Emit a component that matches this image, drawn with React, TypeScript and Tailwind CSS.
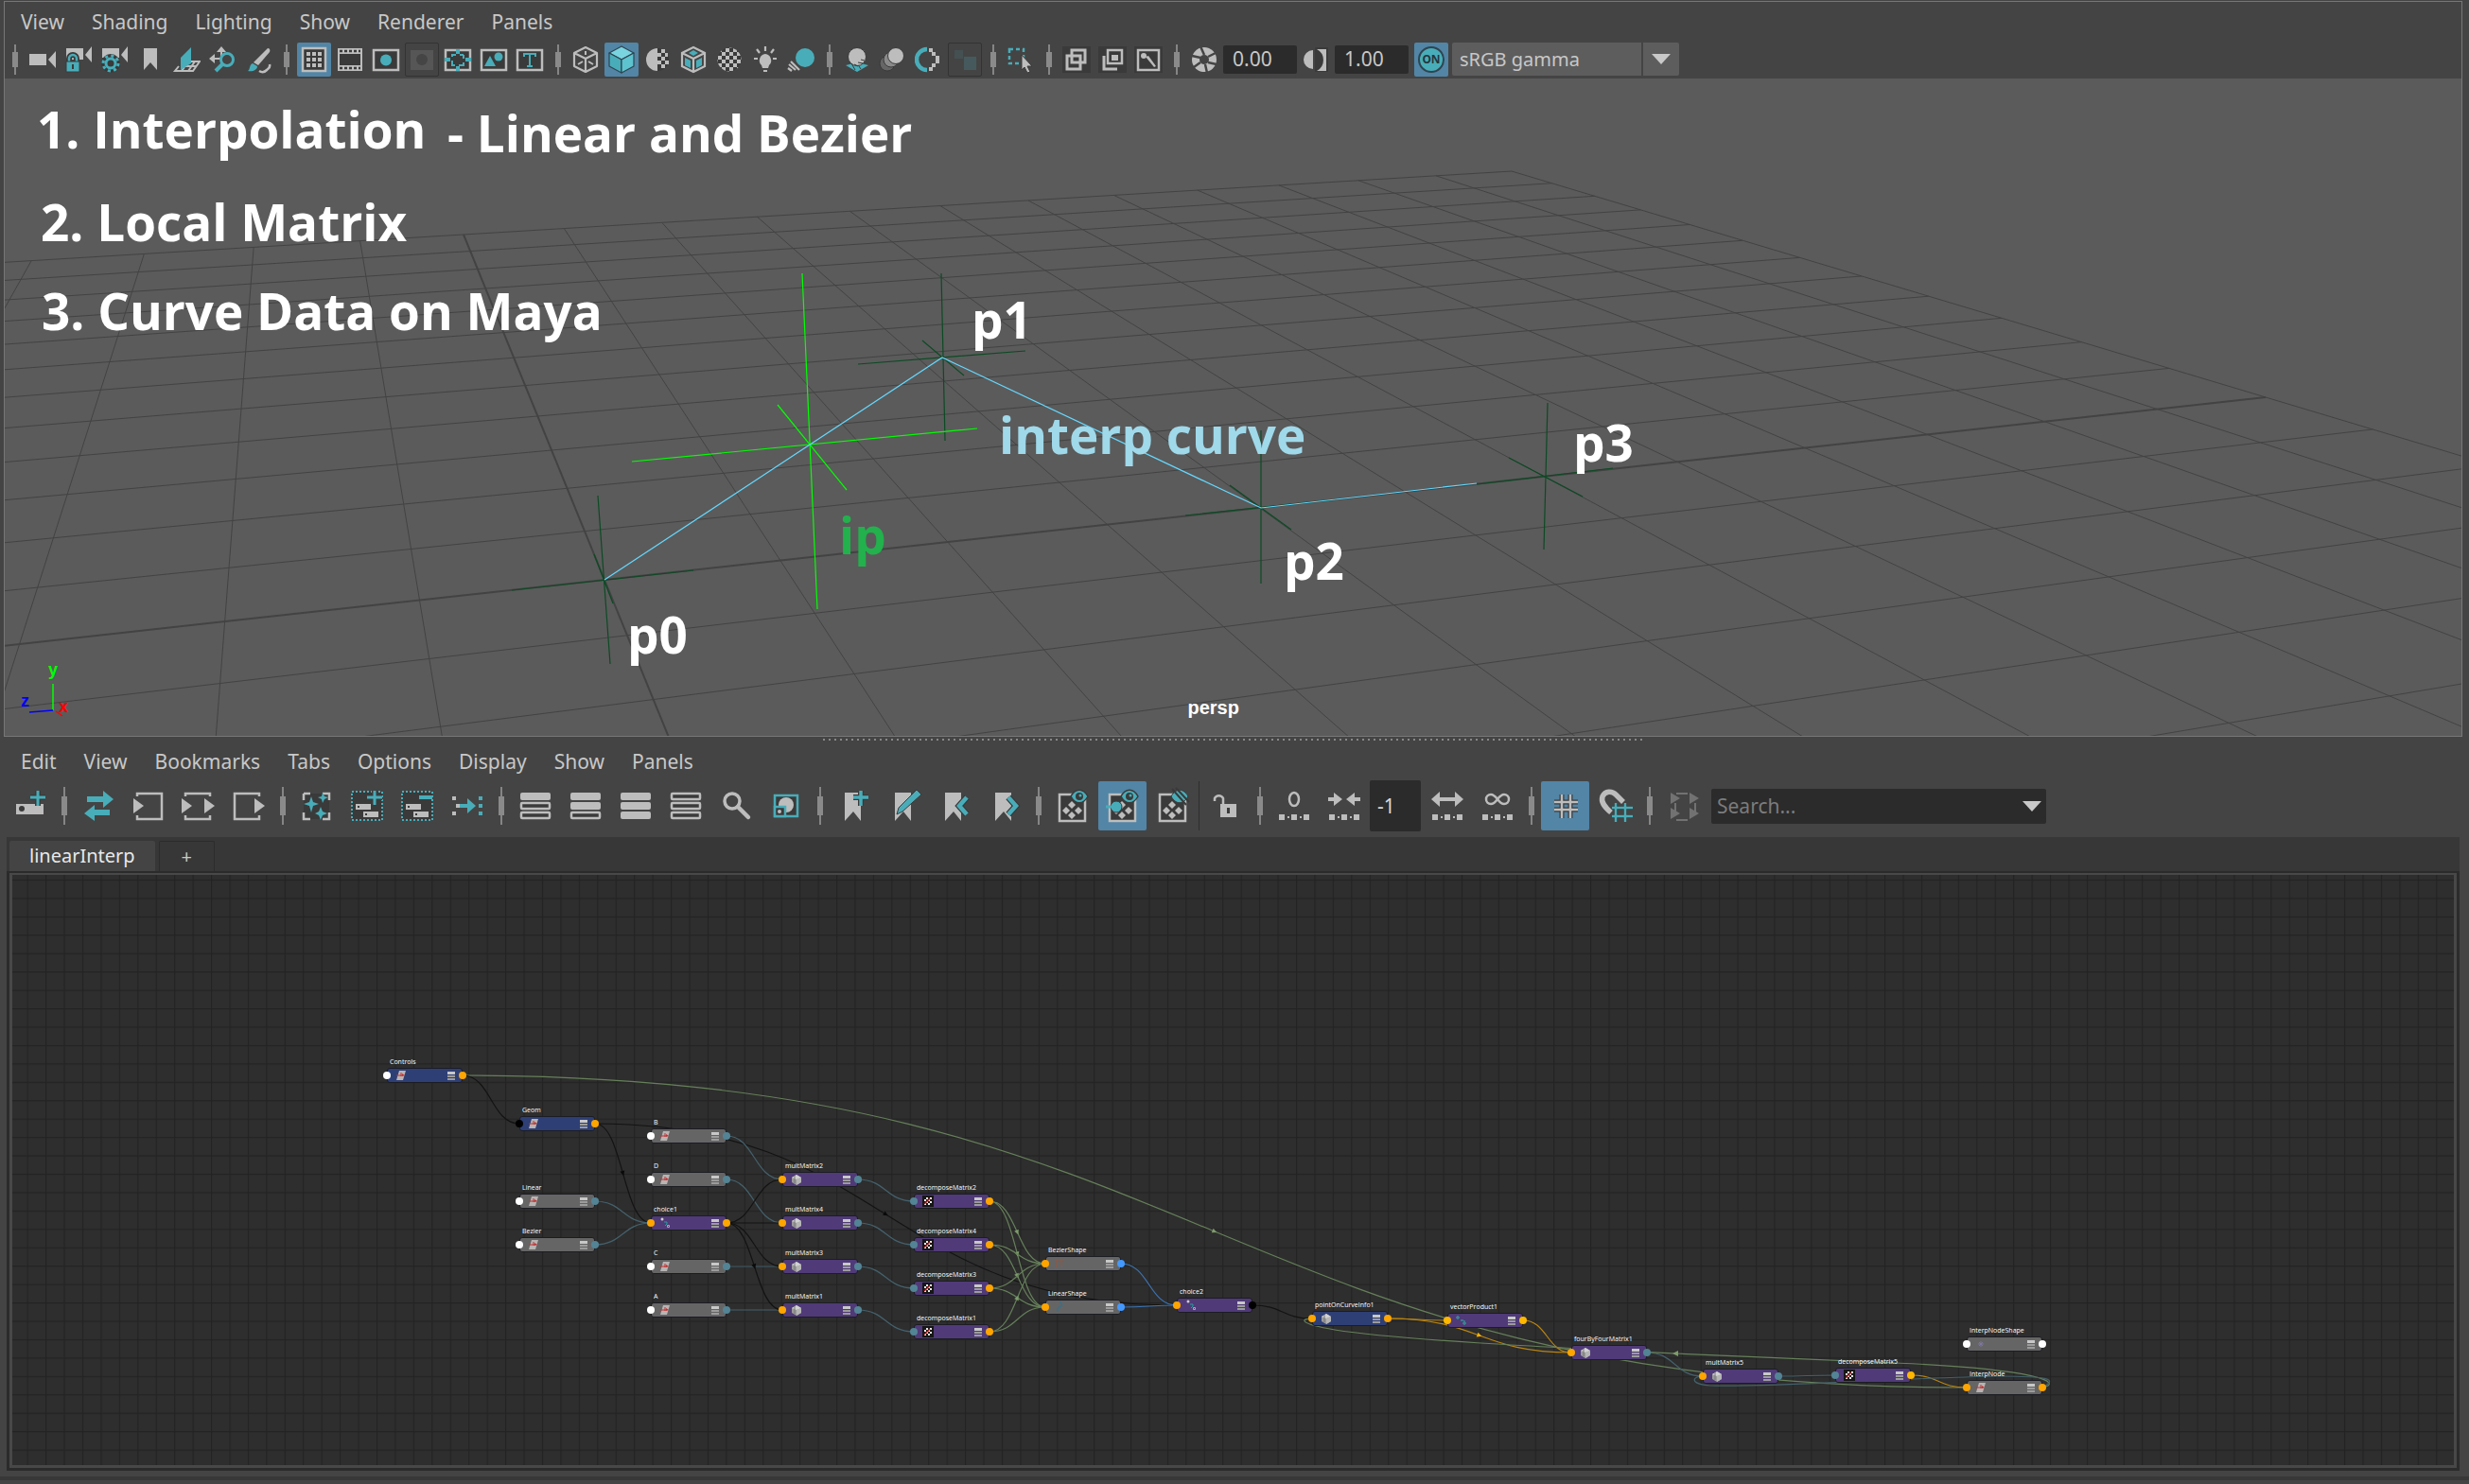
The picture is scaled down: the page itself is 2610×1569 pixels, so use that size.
import React from "react";

const L = "#bdbdbd";
const T = "#48adb9";
const D = "#3a3a3a";

/* ---------- toolbar icons ---------- */

const small: Record<string, React.ReactNode> = {
  camera: (
    <g fill={L}><path d="M1 9h18v12H1zM29 6v18l-8-9z" /></g>
  ),
  cameraLock: (
    <>
      <g fill={L}><path d="M2 3h18v12H2zM29 1v17l-7-8z" /></g>
      <path d="M5 18v-4a4 4 0 0 1 8 0v4" fill="none" stroke={D} strokeWidth="6" />
      <path d="M5 18v-4a4 4 0 0 1 8 0v4" fill="none" stroke={T} strokeWidth="2.5" />
      <path d="M2 17h14v11H2z" fill={T} stroke={D} />
      <path d="M8 20h2v5H8z" fill={D} />
    </>
  ),
  cameraGear: (
    <>
      <g fill={L}><path d="M2 3h18v10H2zM29 1v17l-7-8z" /></g>
      <circle cx="11" cy="19" r="10" fill={D} />
      <circle cx="11" cy="19" r="8" fill="none" stroke={T} strokeWidth="3" strokeDasharray="3.1 3.18" />
      <circle cx="11" cy="19" r="5" fill="none" stroke={T} strokeWidth="3" />
    </>
  ),
  bookmark: <path d="M8 3h14v23l-7-8-7 8z" fill={L} />,
  plane: (
    <>
      <path d="M20 17h9l-7 10H3l4-5M9 22h17M17 27l7-10M10 27l3-4" fill="none" stroke={L} strokeWidth="2" />
      <path d="M9 13 20 2v17L9 26z" fill={T} />
    </>
  ),
  zoomPan: (
    <>
      <path d="M14 1l5 6h-4v6h-2V7H9zM1 14l6-5v4h6v2H7v4z" fill={L} />
      <path d="M16 19 8 27" stroke={T} strokeWidth="4" />
      <circle cx="20" cy="15" r="6.5" fill="#444" stroke={T} strokeWidth="3" />
    </>
  ),
  brush: (
    <>
      <path d="M25 3c2 0 3 2 2 4L15 21l-5-3z" fill={L} />
      <path d="M9 19l5 3c0 4-5 6-10 5 3-2 1-6 5-8z" fill={T} />
      <path d="M16 27c3 2 6 1 8-1s4-2 3-6" fill="none" stroke={L} strokeWidth="2.5" />
    </>
  ),
  grid: (
    <>
      <path d="M3 3h24v24H3z" fill={D} stroke={L} strokeWidth="2.5" />
      <path fill={L} d="M7 7h4v4H7zM13 7h4v4h-4zM19 7h4v4h-4zM7 13h4v4H7zM13 13h4v4h-4zM19 13h4v4h-4zM7 19h4v4H7zM13 19h4v4h-4zM19 19h4v4h-4z" />
    </>
  ),
  film: (
    <>
      <path d="M2 3h26v24H2z" fill={L} />
      <path d="M4 9h22v12H4z" fill={D} />
      <path d="M4 6h22M4 24h22" stroke={D} strokeWidth="2.5" strokeDasharray="3 2" />
    </>
  ),
  gateCircle: (
    <>
      <path d="M2 5h26v21H2z" fill={D} stroke={L} strokeWidth="2.5" />
      <circle cx="15" cy="15.500" r="6" fill={T} />
    </>
  ),
  gateOff: (
    <>
      <path d="M3 5h24v21H3z" fill="#565656" />
      <circle cx="15" cy="15" r="6" fill="#454545" />
    </>
  ),
  gateDash: (
    <>
      <path d="M2 5h26v21H2z" fill={D} stroke={L} strokeWidth="2.5" />
      <path d="M9 10h12v11H9z" fill="none" stroke={T} strokeWidth="2" strokeDasharray="4 4 4 0" />
      <path d="M15 4v5M15 22v5M1 15h6M23 15h6" stroke={T} strokeWidth="4" />
    </>
  ),
  gateShapes: (
    <>
      <path d="M2 5h26v21H2z" fill={D} stroke={L} strokeWidth="2.5" />
      <path d="M5 22l6-11 6 11z" fill={T} />
      <circle cx="20" cy="12" r="4.500" fill={T} />
    </>
  ),
  gateT: (
    <>
      <path d="M2 5h26v21H2z" fill={D} stroke={L} strokeWidth="2.5" />
      <path d="M9 12V9h12v3M15 9v13M12 22h6" fill="none" stroke={T} strokeWidth="2" />
    </>
  ),
  cubeWire: (
    <g fill="none" stroke={L} strokeWidth="2.2" strokeLinejoin="round">
      <path d="M15 2 27 8v14l-12 6-12-6V8zM3 8l12 6 12-6M15 14v14" />
      <path d="M15 6v4M7 20l5-3M23 20l-5-3" strokeWidth="2" />
    </g>
  ),
  cubeSolid: (
    <g stroke="#2f4450" strokeWidth="1.2" strokeLinejoin="round">
      <path d="M15 1 28 8l-13 7L2 8z" fill="#7ad4e0" />
      <path d="M2 8l13 7v14L2 22z" fill="#48adb9" />
      <path d="M28 8l-13 7v14l13-7z" fill="#5cc3cf" />
    </g>
  ),
  sphereHalf: (
    <>
      <circle cx="15" cy="15" r="12" fill={D} />
      <path d="M15 3a12 12 0 0 0 0 24z" fill={L} />
      <path fill={L} d="M19 4h4v4h-4zM15 8h4v4h-4zM23 8h3v4h-3zM19 12h4v4h-4zM15 16h4v4h-4zM23 16h4v4h-4zM19 20h4v4h-4z" />
    </>
  ),
  cubeTex: (
    <>
      <path d="M15 2 27 8v14l-12 6-12-6V8zM3 8l12 6 12-6M15 14v14" fill="none" stroke={L} strokeWidth="2.2" />
      <path d="M15 5l5 3-5 3-5-3zM6 13l6 3v8l-6-3zM24 13l-6 3v8l6-3z" fill={T} />
    </>
  ),
  checker: (
    <>
      <defs>
        <pattern id="chk" width="8" height="8" x="3" y="3" patternUnits="userSpaceOnUse">
          <path d="M0 0h8v8H0z" fill={D} />
          <path d="M0 0h4v4H0zM4 4h4v4H4z" fill={L} />
        </pattern>
      </defs>
      <circle cx="15" cy="15" r="12.500" fill="url(#chk)" />
    </>
  ),
  bulb: (
    <>
      <path d="M15 9a7 7 0 0 1 4 12l-1 3h-6l-1-3a7 7 0 0 1 4-12z" fill={L} />
      <path d="M13 26h4v2h-4z" fill={L} />
      <path d="M15 1v5M6 4l3 4M24 4l-3 4M3 14h4M23 14h4" stroke={L} strokeWidth="2.2" />
    </>
  ),
  shadowTeal: (
    <>
      <circle cx="19" cy="13" r="10" fill={T} />
      <path d="M2 20l7 6M4 17l9 9M1 24l4 3" stroke={L} strokeWidth="2.2" />
    </>
  ),
  ballGround: (
    <>
      <path d="M3 21l12-3 12 3-12 7z" fill={T} />
      <path d="M9 19l4 7M15 19l4 6" stroke={D} />
      <circle cx="15" cy="12" r="9.500" fill={L} stroke={D} />
      <path d="M12 20l4 2M16 18l5 1M19 15l4 1" stroke={D} />
    </>
  ),
  ballTrail: (
    <>
      <circle cx="9" cy="19" r="8" fill="#666" stroke={D} />
      <circle cx="13" cy="15" r="8" fill="#8a8a8a" stroke={D} />
      <circle cx="18" cy="11" r="8.500" fill={L} stroke={D} />
    </>
  ),
  ringDash: (
    <>
      <path d="M13 4a11 11 0 0 0 0 22" fill="none" stroke={T} strokeWidth="4.500" />
      <path d="M15 3h4v4h3v4h4v8h-4v4h-3v4h-4v-4h3v-4h4v-8h-4V7h-3z" fill={L} />
    </>
  ),
  squaresOff: (
    <>
      <path d="M14 12h13v14H14z" fill="#465a5e" />
      <path d="M4 5h9v9H4z" fill="#445052" />
    </>
  ),
  marquee: (
    <>
      <path d="M3 4h15v15H3z" fill="none" stroke={T} strokeWidth="2.500" strokeDasharray="4 3" />
      <path d="M16 10l11 12h-5l3 6-3 1-3-6-3 3z" fill={L} stroke={D} />
    </>
  ),
  layersA: (
    <>
      <path d="M0 1h30v28H0z" fill={D} />
      <path d="M10 5h14v13H10z" fill="none" stroke={L} strokeWidth="3" />
      <path d="M5 11h14v14H5z" fill="none" stroke={L} strokeWidth="3" />
    </>
  ),
  layersB: (
    <>
      <path d="M0 1h30v28H0z" fill={D} />
      <path d="M10 5h15v14H10z" fill="none" stroke={L} strokeWidth="2.500" />
      <path d="M6 11v14h14" fill="none" stroke={L} strokeWidth="3" />
      <path d="M14 10h7v6h-7z" fill={L} />
    </>
  ),
  layersC: (
    <>
      <path d="M0 1h30v28H0z" fill={D} />
      <path d="M4 5h22v21H4z" fill="none" stroke={L} strokeWidth="2.500" />
      <circle cx="10" cy="11" r="3" fill={L} />
      <path d="M12 12l3-1 8 11-2 1z" fill={L} />
    </>
  ),
  aperture: (
    <>
      <circle cx="15" cy="15" r="13" fill={L} />
      <circle cx="15" cy="15" r="5" fill="#444" />
      <path d="M11 1l4 9M27 8l-8 4M28 20l-9-2M18 29l-2-9M4 23l7-5M2 11l9 2" stroke="#444" strokeWidth="2.500" />
    </>
  ),
  contrast: (
    <>
      <path d="M14 2h14v26H14z" fill={D} />
      <path d="M12 5a10 10 0 0 0 0 20z" fill={L} />
      <path d="M16 4h10v23H16a13 13 0 0 0 0-23z" fill={L} />
    </>
  ),
};

const bar = (y: number, full: boolean) =>
  full ? (
    <rect key={y} x="2" y={y} width="32" height="8" rx="2" fill={L} />
  ) : (
    <rect key={y} x="3" y={y + 1} width="30" height="6" rx="1" fill={D} stroke={L} strokeWidth="2.500" />
  );
const mark = <path d="M8 4h17v30l-8-10-9 10z" fill={L} />;
const dots = <path d="M2 27h6v6H2zM11 29h2v2h-2zM15 27h6v6h-6zM24 29h2v2h-2zM28 27h6v6h-6z" fill={L} />;
const diamonds = (
  <>
    <path d="M4 6h27v28H4z" fill={D} stroke={L} strokeWidth="2.500" />
    <path d="M17 13l4 4-4 4-4-4zM11 19l4 4-4 4-4-4zM24 19l4 4-4 4-4-4zM17 24l4 4-4 4-4-4z" fill={L} />
  </>
);
const eye = (
  <>
    <path d="M16 8c5-9 13-9 18 0-5 9-13 9-18 0z" fill={T} stroke={D} strokeWidth="1.500" />
    <circle cx="25" cy="8" r="4" fill={D} />
    <circle cx="26" cy="7" r="1.500" fill={T} />
  </>
);

const big: Record<string, React.ReactNode> = {
  addNode: (
    <>
      <path d="M3 16h29v11H3z" fill={L} />
      <circle cx="9" cy="21" r="3" fill={D} />
      <path d="M26 2v16M18 9h16" stroke={D} strokeWidth="6" />
      <path d="M26 2v16M18 9h16" stroke={T} strokeWidth="3" />
    </>
  ),
  swap: <path d="M6 8h17V2l11 9-11 9v-6H6zM30 22H14v-5L3 26l11 8v-6h16z" fill={T} />,
  inBox: (
    <>
      <path d="M6 5h26v27H6z" fill="none" stroke={L} strokeWidth="2.500" />
      <path d="M1 8h7v20H1z" fill="#444" /><path d="M2 10l11 8-11 8z" fill={L} />
    </>
  ),
  inOut: (
    <>
      <path d="M4 5h26v27H4z" fill="none" stroke={L} strokeWidth="2.500" />
      <path d="M0 8h7v20H0zM27 8h8v20h-8z" fill="#444" />
      <path d="M0 10l11 8-11 8zM24 10l11 8-11 8z" fill={L} />
    </>
  ),
  outBox: (
    <>
      <path d="M3 5h26v27H3z" fill="none" stroke={L} strokeWidth="2.500" />
      <path d="M26 8h7v20h-7z" fill="#444" /><path d="M24 10l11 8-11 8z" fill={L} />
    </>
  ),
  sparkles: (
    <>
      <path d="M4 5h27v27H4z" fill={D} stroke={L} strokeWidth="2.500" strokeDasharray="7 13 14 13 14 13 14 13 7 0" />
      <path d="M12 8l2 6 6 2-6 2-2 7-2-7-6-2 6-2zM24 4l2 4 4 1-4 2-2 4-1-4-4-2 4-1zM22 19l2 5 5 2-5 2-2 5-2-5-4-2 4-2z" fill={T} />
    </>
  ),
  addSel: (
    <>
      <path d="M2 3h32v30H2z" fill={D} stroke={T} strokeWidth="2" strokeDasharray="2 2" />
      <path d="M6 16h16v6H6zM14 24h16v6H14z" fill={L} />
      <path d="M8 18h2v2H8zM16 26h2v2h-2z" fill={D} />
      <path d="M26 2v15M18 9h16" stroke={D} strokeWidth="6" />
      <path d="M26 2v15M18 9h16" stroke={T} strokeWidth="3" />
    </>
  ),
  subSel: (
    <>
      <path d="M2 3h32v30H2z" fill={D} stroke={T} strokeWidth="2" strokeDasharray="2 2" />
      <path d="M6 16h16v6H6zM14 24h16v6H14z" fill={L} />
      <path d="M8 18h2v2H8zM16 26h2v2h-2z" fill={D} />
      <path d="M20 9h14" stroke={T} strokeWidth="4" />
    </>
  ),
  graph: (
    <>
      <path d="M2 8h4v4H2zM6 16h4v4H6zM2 24h4v4H2z" fill={L} />
      <path d="M10 16h8v-6l9 8-9 8v-6h-8zM30 8h4v4h-4zM30 16h4v4h-4zM30 24h4v4h-4z" fill={T} />
    </>
  ),
  bars1: <>{bar(4, true)}{bar(14, false)}{bar(24, false)}</>,
  bars2: <>{bar(4, true)}{bar(14, true)}{bar(24, false)}</>,
  bars3: <>{bar(4, true)}{bar(14, true)}{bar(24, true)}</>,
  bars4: <>{bar(4, false)}{bar(14, false)}{bar(24, false)}</>,
  search: (
    <g fill="none" stroke={L}>
      <circle cx="14" cy="13" r="8" strokeWidth="3.500" />
      <path d="M20 19l11 11" strokeWidth="4.500" strokeLinecap="round" />
    </g>
  ),
  swatch: (
    <>
      <path d="M6 7h24v22H6z" fill={D} stroke={T} strokeWidth="2.500" />
      <circle cx="18" cy="17" r="8" fill={L} />
      <path d="M6 19h11v10H6z" fill={D} stroke={T} strokeWidth="2.500" />
      <circle cx="11" cy="24" r="2" fill={L} />
    </>
  ),
  markAdd: (
    <>
      {mark}
      <path d="M25 2v16M17 9h16" stroke={D} strokeWidth="6" />
      <path d="M25 2v16M17 9h16" stroke={T} strokeWidth="3.500" />
    </>
  ),
  markEdit: (
    <>
      {mark}
      <path d="M31 1l5 5L16 24l-6 3 2-7z" fill={T} stroke={D} />
    </>
  ),
  markPrev: (
    <>
      {mark}
      <path d="M31 9l-8 9 8 9" fill="none" stroke={D} strokeWidth="7" />
      <path d="M31 9l-8 9 8 9" fill="none" stroke={T} strokeWidth="4.500" />
    </>
  ),
  markNext: (
    <>
      {mark}
      <path d="M22 9l8 9-8 9" fill="none" stroke={D} strokeWidth="7" />
      <path d="M22 9l8 9-8 9" fill="none" stroke={T} strokeWidth="4.500" />
    </>
  ),
  viewA: <>{diamonds}{eye}</>,
  viewB: (
    <>
      {diamonds}{eye}
      <circle cx="11" cy="19" r="6" fill={T} stroke={D} /><path d="M0 19h8" stroke={T} strokeWidth="3" />
    </>
  ),
  viewC: (
    <>
      {diamonds}
      <path d="M16 8c5-9 13-9 18 0-5 9-13 9-18 0z" fill={T} stroke={D} />
      <path d="M17 0l15 17M21-1l14 15" stroke={D} strokeWidth="2" />
    </>
  ),
  unlock: (
    <>
      <path d="M15 18V10a5 5 0 0 0-9 0v3" fill="none" stroke={L} strokeWidth="2.500" />
      <path d="M12 16h17v14H12z" fill={L} />
      <path d="M19 20h3v6h-3z" fill={D} />
    </>
  ),
  zero: (
    <>
      <ellipse cx="18" cy="11" rx="5" ry="7" fill="none" stroke={L} strokeWidth="2.500" />
      {dots}
    </>
  ),
  collapse: (
    <>
      <path d="M1 9h6V4l9 7-9 7v-5H1zM35 9h-6V4l-9 7 9 7v-5h6z" fill={L} />
      {dots}
    </>
  ),
  expand: (
    <>
      <path d="M1 11l9-8v6h16V3l9 8-9 8v-6H10v6z" fill={L} />
      {dots}
    </>
  ),
  infinity: (
    <>
      <path d="M18 11c-3-4-5-5-7-5a5 5 0 0 0 0 10c2 0 4-1 7-5s5-5 7-5a5 5 0 0 1 0 10c-2 0-4-1-7-5z" fill="none" stroke={L} strokeWidth="2.500" />
      {dots}
    </>
  ),
  hash: (
    <>
      <path d="M14 6v25M23 6v25M6 14h25M6 22h25" stroke={D} strokeWidth="5" />
      <path d="M14 6v25M23 6v25M6 14h25M6 22h25" stroke={L} strokeWidth="2.500" />
    </>
  ),
  magnet: (
    <>
      <path d="M13 25C6 19 2 14 4 8c3-6 10-6 14-2l8 8" fill="none" stroke={L} strokeWidth="5.500" />
      <path d="M18 15v20M28 15v20M14 20h22M14 29h22" stroke={D} strokeWidth="4" />
      <path d="M18 15v20M28 15v20M14 20h22M14 29h22" stroke={T} strokeWidth="2.500" />
    </>
  ),
  frame: (
    <g fill="#727272">
      <path d="M4 4l10 6-10 6zM24 4l10 6-10 6zM4 20l10 6-10 6zM24 20l10 6-10 6zM10 4h12v2H10zM10 32h12v2H10zM8 15h2v10H8zM29 15h2v10h-2z" />
    </g>
  ),
};

function SmallBtn({ name, on, off }: { name: string; on?: boolean; off?: boolean }) {
  const tone = on ? "bg-[#5285a6]" : off ? "border border-[#333] bg-[#444]" : "";
  return (
    <button aria-label={name} aria-pressed={on} className={`flex h-9 w-9 shrink-0 items-center justify-center rounded-xs ${tone}`}>
      <svg width="30" height="30" viewBox="0 0 30 30" className="shrink-0">{small[name]}</svg>
    </button>
  );
}

function BigBtn({ name, on }: { name: string; on?: boolean }) {
  return (
    <button aria-label={name} aria-pressed={on} className={`flex h-[52px] w-[51px] shrink-0 items-center justify-center rounded-xs ${on ? "bg-[#5285a6]" : ""}`}>
      <svg width="36" height="36" viewBox="0 0 36 36" className="shrink-0 overflow-visible">{big[name]}</svg>
    </button>
  );
}

function Sep({ tall }: { tall?: boolean }) {
  return (
    <div className={`flex shrink-0 flex-col items-center justify-center ${tall ? "w-[17px]" : "w-[19px]"}`}>
      <div className={`w-0.5 bg-[#858585] ${tall ? "h-2.5" : "h-2"}`} />
      <div className={`w-1.5 bg-[#8a8a8a] ${tall ? "h-5" : "h-4"}`} />
      <div className={`w-0.5 bg-[#858585] ${tall ? "h-2.5" : "h-2"}`} />
    </div>
  );
}

function Menu({ items }: { items: string[] }) {
  return (
    <nav className="flex gap-[29px] pl-[17px] text-[21px] leading-7 text-[#c8c8c8]">
      {items.map((t) => <button key={t}>{t}</button>)}
    </nav>
  );
}

/* ---------- perspective floor grid ---------- */

type P = [number, number];

function homography(p00: P, p10: P, p11: P, p01: P) {
  const dx1 = p10[0] - p11[0], dx2 = p01[0] - p11[0];
  const dy1 = p10[1] - p11[1], dy2 = p01[1] - p11[1];
  const sx = p00[0] - p10[0] + p11[0] - p01[0];
  const sy = p00[1] - p10[1] + p11[1] - p01[1];
  const den = dx1 * dy2 - dx2 * dy1;
  const g = (sx * dy2 - dx2 * sy) / den;
  const h = (dx1 * sy - sx * dy1) / den;
  return {
    w: (u: number, v: number) => g * u + h * v + 1,
    at: (u: number, v: number): P => {
      const w = g * u + h * v + 1;
      return [
        ((p10[0] - p00[0] + g * p10[0]) * u + (p01[0] - p00[0] + h * p01[0]) * v + p00[0]) / w,
        ((p10[1] - p00[1] + g * p10[1]) * u + (p01[1] - p00[1] + h * p01[1]) * v + p00[1]) / w,
      ];
    },
  };
}

const floor = homography([634, 530], [2390, 337], [1593, 98], [485, 165]);

function floorLine(f: (t: number) => P) {
  const limit = 0.08;
  let a = -1;
  const b = 1;
  const wa = floor.w(...f(a)), wb = floor.w(...f(b));
  if (wb < limit) return null;
  if (wa < limit) a = a + ((limit - wa) / (wb - wa)) * (b - a);
  return [floor.at(...f(a)), floor.at(...f(b))];
}

const floorLines: { p: P[]; axis: boolean }[] = [];
for (let i = -12; i <= 12; i++) {
  const k = i / 12;
  for (const f of [(t: number): P => [t, k], (t: number): P => [k, t]]) {
    const p = floorLine(f);
    if (p) floorLines.push({ p: p as P[], axis: i === 0 });
  }
}

function Scene() {
  return (
    <svg className="absolute inset-0 h-full w-full" aria-hidden="true">
      <g stroke="#434343" strokeWidth="1">
        {floorLines.map(({ p, axis }, i) => (
          <line key={i} x1={p[0][0]} y1={p[0][1]} x2={p[1][0]} y2={p[1][1]} strokeWidth={axis ? 2 : 1} />
        ))}
      </g>
      <g stroke="#0c4a24" strokeWidth="1.200">
        <path d="M990 206 994 383M902 302l177-14M970 277l44 37" />
        <path d="M627 441 640 619M536 541 728 520M623 503 643 555" />
        <path d="M1328 372V534M1248 462l160-17M1295 430l65 47" />
        <path d="M1631 343 1627 498M1556 429 1700 412M1590 401l78 41" />
      </g>
      <path d="M843 206 859 561M663 405 1028 370M817 345 890 435" fill="none" stroke="#0f0" strokeWidth="1.200" />
      <path d="M634 530 991 295 1328 454 1556 428" fill="none" stroke="#64d9ff" strokeWidth="1.200" />
      <path d="M51 640v28" stroke="#0f0" strokeWidth="1.500" />
      <path d="M26 670l25-2" stroke="#00f" strokeWidth="1.500" />
      <path d="M54 669l7 5" stroke="#f00" strokeWidth="1.500" />
    </svg>
  );
}

function Note({ className, children }: { className: string; children: React.ReactNode }) {
  return <span className={`absolute whitespace-nowrap font-bold ${className}`}>{children}</span>;
}

/* ---------- node graph ---------- */

const PORT: Record<string, string> = { w: "#fff", k: "#000", o: "#ffa500", y: "#ffb700", t: "#538495", b: "#4499ff" };
const BODY: Record<string, string> = { blue: "#2e3f76", grey: "#656565", purple: "#503a78" };

type NodeT = { id: string; label: string; x: number; y: number; body: string; ports: string; glyph: string };
const n = (label: string, x: number, y: number, body: string, ports: string, glyph: string): NodeT => ({ id: label, label, x, y, body, ports, glyph });

const nodes: NodeT[] = [
  n("Controls", 396, 212, "blue", "wo", "xform"),
  n("Geom", 536, 263, "blue", "ko", "xform"),
  n("B", 675, 276, "grey", "wt", "xform"),
  n("D", 675, 322, "grey", "wt", "xform"),
  n("Linear", 536, 345, "grey", "wt", "xform"),
  n("Bezier", 536, 391, "grey", "wt", "xform"),
  n("choice1", 675, 368, "purple", "oo", "choice"),
  n("C", 675, 414, "grey", "wt", "xform"),
  n("A", 675, 460, "grey", "wt", "xform"),
  n("multMatrix2", 814, 322, "purple", "ot", "cube"),
  n("multMatrix4", 814, 368, "purple", "ot", "cube"),
  n("multMatrix3", 814, 414, "purple", "ot", "cube"),
  n("multMatrix1", 814, 460, "purple", "ot", "cube"),
  n("decomposeMatrix2", 953, 345, "purple", "to", "decomp"),
  n("decomposeMatrix4", 953, 391, "purple", "to", "decomp"),
  n("decomposeMatrix3", 953, 437, "purple", "to", "decomp"),
  n("decomposeMatrix1", 953, 483, "purple", "to", "decomp"),
  n("BezierShape", 1092, 411, "grey", "ob", "bezier"),
  n("LinearShape", 1092, 457, "grey", "ob", "curve"),
  n("choice2", 1231, 455, "purple", "ok", "choice"),
  n("pointOnCurveInfo1", 1374, 469, "blue", "oo", "cube"),
  n("vectorProduct1", 1517, 471, "purple", "yy", "vector"),
  n("fourByFourMatrix1", 1648, 505, "purple", "ot", "cube"),
  n("multMatrix5", 1787, 530, "purple", "ot", "cube"),
  n("decomposeMatrix5", 1927, 529, "purple", "ty", "decomp"),
  n("InterpNodeShape", 2066, 496, "grey", "ww", "star"),
  n("InterpNode", 2066, 542, "grey", "oo", "xform"),
];

const GREEN = "#66805a", TEAL = "#44616c", INK = "#131313", GOLD = "#b98512", SKY = "#3c74b4";

const wires: [string, string, string][] = [
  ["Controls", "InterpNode", GREEN],
  ["Controls", "Geom", INK],
  ["Geom", "choice1", INK],
  ["Geom", "choice2", INK],
  ["Linear", "choice1", TEAL],
  ["Bezier", "choice1", TEAL],
  ["B", "multMatrix2", TEAL],
  ["D", "multMatrix4", TEAL],
  ["C", "multMatrix3", TEAL],
  ["A", "multMatrix1", TEAL],
  ["choice1", "multMatrix2", INK],
  ["choice1", "multMatrix4", INK],
  ["choice1", "multMatrix3", INK],
  ["choice1", "multMatrix1", INK],
  ["multMatrix2", "decomposeMatrix2", TEAL],
  ["multMatrix4", "decomposeMatrix4", TEAL],
  ["multMatrix3", "decomposeMatrix3", TEAL],
  ["multMatrix1", "decomposeMatrix1", TEAL],
  ["decomposeMatrix2", "BezierShape", GREEN],
  ["decomposeMatrix2", "LinearShape", GREEN],
  ["decomposeMatrix4", "BezierShape", GREEN],
  ["decomposeMatrix4", "LinearShape", GREEN],
  ["decomposeMatrix3", "BezierShape", GREEN],
  ["decomposeMatrix3", "LinearShape", GREEN],
  ["decomposeMatrix1", "BezierShape", GREEN],
  ["decomposeMatrix1", "LinearShape", GREEN],
  ["BezierShape", "choice2", SKY],
  ["LinearShape", "choice2", SKY],
  ["choice2", "pointOnCurveInfo1", INK],
  ["pointOnCurveInfo1", "vectorProduct1", GOLD],
  ["pointOnCurveInfo1", "fourByFourMatrix1", GOLD],
  ["vectorProduct1", "fourByFourMatrix1", GOLD],
  ["fourByFourMatrix1", "multMatrix5", TEAL],
  ["multMatrix5", "decomposeMatrix5", TEAL],
  ["decomposeMatrix5", "InterpNode", GOLD],
];

const ARROW: Record<string, string> = { [GREEN]: "#7d9c6c", [INK]: "#0a0a0a", [GOLD]: "#ffb000", [TEAL]: TEAL, [SKY]: SKY };
const byId = Object.fromEntries(nodes.map((d) => [d.id, d]));

function Wire({ from, to, color }: { from: string; to: string; color: string }) {
  const a = byId[from], b = byId[to];
  const x1 = a.x + 80, x2 = b.x, mx = (x1 + x2) / 2, my = (a.y + b.y) / 2;
  const long = Math.hypot(x2 - x1, b.y - a.y) > 80;
  const deg = (Math.atan2(2 * (b.y - a.y), x2 - x1) * 180) / Math.PI;
  return (
    <>
      <path d={`M${x1} ${a.y}C${mx} ${a.y} ${mx} ${b.y} ${x2} ${b.y}`} fill="none" stroke={color} strokeWidth="1.200" />
      {long && <path d="M-2.500-2.500 2.500 0-2.500 2.500z" transform={`translate(${mx} ${my}) rotate(${deg})`} fill={ARROW[color]} />}
    </>
  );
}

const glyphs: Record<string, React.ReactNode> = {
  xform: (
    <>
      <path d="M4 1h7L8 11H1z" fill="#b8b4b4" />
      <path d="M1 6h6M6 3v4" stroke="#c03030" strokeWidth="1" /><path d="M7 4l3 2-3 1z" fill="#c03030" />
    </>
  ),
  choice: (
    <>
      <circle cx="3" cy="2" r="1.500" fill="#ccc" />
      <path d="M5 5h3v2L6 9" fill="none" stroke="#2e9aa0" />
      <path d="M8.500 8.500h2v2h-2z" fill="none" stroke="#aaa" />
    </>
  ),
  cube: (
    <>
      <path d="M6 1l5 3v5l-5 3-5-3V4z" fill="#9a9a9a" />
      <path d="M6 1l5 3-5 2-5-2z" fill="#d2d2d2" /><path d="M6 6l5-2v5l-5 3z" fill="#b5b5b5" />
      <path d="M4 2v8" stroke="#777" />
    </>
  ),
  decomp: (
    <>
      <path d="M0 0h12v12H0z" fill="#161616" />
      <path d="M2 4h2v2H2zM4 2h2v2H4zM6 4h2v2H6zM8 2h2v2H8zM8 6h2v2H8zM6 8h2v2H6zM4 6h2v2H4zM2 8h2v2H2z" fill="#eee" />
      <path d="M2 9l6-6" stroke="#b01818" strokeWidth="1.500" />
    </>
  ),
  bezier: <path d="M1 2h10M3 2v7M8 2v7M2 9h2" fill="none" stroke="#8a5a48" strokeWidth="1.200" />,
  curve: <path d="M6 1c4 1 3 4 0 5S4 9 4 11" fill="none" stroke="#3c6f86" strokeWidth="1.500" />,
  vector: <path d="M2 1v4M0 3h4M5 6h3M9 6v5M7 9h4" fill="none" stroke="#3a8a94" strokeWidth="1.500" />,
  star: <path d="M6 3v6M3 6h6M4 4l4 4M8 4l-4 4" stroke="#8378a8" strokeWidth="0.800" />,
};

function GraphNode({ d }: { d: NodeT }) {
  return (
    <div className="absolute w-20" style={{ left: d.x, top: d.y - 18 }}>
      <div className="h-2.5 whitespace-nowrap pl-[3px] font-['Open_Sans','Noto_Sans',sans-serif] text-[7px] leading-2 text-white">{d.label}</div>
      <div className="relative flex h-4 items-center justify-between rounded-[3px] border border-[#1c1c24] px-2" style={{ backgroundColor: BODY[d.body] }}>
        <svg width="12" height="12" viewBox="0 0 12 12" className="shrink-0">{glyphs[d.glyph]}</svg>
        <svg width="8" height="9" viewBox="0 0 8 9" className="-mr-px shrink-0">
          <path d="M0 0h8v3H0z" fill="#c8c8c8" />
          <path d="M0 4h8v2H0zM0 7h8v2H0z" fill="#9c9c9c" />
        </svg>
        <i className="absolute -left-[5px] top-[3px] size-2 rounded-full" style={{ backgroundColor: PORT[d.ports[0]] }} />
        <i className="absolute -right-[5px] top-[3px] size-2 rounded-full" style={{ backgroundColor: PORT[d.ports[1]] }} />
      </div>
    </div>
  );
}

const names = (s: string) => s.split(" ");

export default function App() {
  return (
    <div className="flex h-screen flex-col bg-[#444] pt-px font-['Noto_Sans','Open_Sans',sans-serif]">
      {/* viewport panel */}
      <section className="mx-1 mr-[7px] flex min-h-0 flex-[777] flex-col border border-[#777] bg-[#444]">
        <div className="pt-[7px]">
          <Menu items={names("View Shading Lighting Show Renderer Panels")} />
        </div>
        <div className="flex h-[46px] items-center gap-0.5 pl-px pt-[5px]">
          <Sep />
          {names("camera cameraLock cameraGear bookmark plane zoomPan brush").map((k) => <SmallBtn key={k} name={k} />)}
          <Sep />
          <SmallBtn name="grid" on />
          <SmallBtn name="film" />
          <SmallBtn name="gateCircle" />
          <SmallBtn name="gateOff" off />
          {names("gateDash gateShapes gateT").map((k) => <SmallBtn key={k} name={k} />)}
          <Sep />
          <SmallBtn name="cubeWire" />
          <SmallBtn name="cubeSolid" on />
          {names("sphereHalf cubeTex checker bulb shadowTeal").map((k) => <SmallBtn key={k} name={k} />)}
          <Sep />
          {names("ballGround ballTrail ringDash").map((k) => <SmallBtn key={k} name={k} />)}
          <SmallBtn name="squaresOff" off />
          <Sep />
          <SmallBtn name="marquee" />
          <Sep />
          {names("layersA layersB layersC").map((k) => <SmallBtn key={k} name={k} />)}
          <Sep />
          <SmallBtn name="aperture" />
          <input aria-label="Exposure" defaultValue="0.00" className="h-[30px] w-[78px] rounded-xs bg-[#2b2b2b] pl-2.5 text-[21px] text-[#c8c8c8]" />
          <SmallBtn name="contrast" />
          <input aria-label="Gamma" defaultValue="1.00" className="h-[30px] w-[78px] rounded-xs bg-[#2b2b2b] pl-2.5 text-[21px] text-[#c8c8c8]" />
          <button aria-label="Color management" className="ml-1 flex h-9 w-9 items-center justify-center rounded-xs bg-[#5285a6]">
            <span className="flex size-7 items-center justify-center rounded-full border-2 border-[#2f4450] bg-[#48adb9] text-[12px] font-bold text-[#26363c]">ON</span>
          </button>
          <div className="relative ml-0.5">
            <select aria-label="View transform" className="h-[35px] w-60 appearance-none rounded-xs bg-[#5d5d5d] pl-2 text-[20px] text-[#c8c8c8]">
              <option>sRGB gamma</option>
            </select>
            <span className="pointer-events-none absolute inset-y-0 right-0 flex w-10 items-center justify-center border-l-2 border-[#444]">
              <svg width="20" height="11" viewBox="0 0 20 11"><path d="M0 0h20L10 11z" fill="#c8c8c8" /></svg>
            </span>
          </div>
        </div>
        <div className="relative min-h-0 flex-1 overflow-hidden bg-[#5b5b5b] font-['Open_Sans','Noto_Sans',sans-serif] text-[53px] leading-[60px] text-white">
          <Scene />
          <Note className="left-[34px] top-6">1. Interpolation</Note>
          <Note className="left-[468px] top-7">- Linear and Bezier</Note>
          <Note className="left-[38px] top-[122px]">2. Local Matrix</Note>
          <Note className="left-[39px] top-[216px]">3. Curve Data on Maya</Note>
          <Note className="left-[1022px] top-[225px]">p1</Note>
          <Note className="left-[1051px] top-[347px] text-[#9fd9ea]">interp curve</Note>
          <Note className="left-[882px] top-[453px] text-[#22b14c]">ip</Note>
          <Note className="left-[658px] top-[558px]">p0</Note>
          <Note className="left-[1352px] top-[480px]">p2</Note>
          <Note className="left-[1658px] top-[355px]">p3</Note>
          <Note className="bottom-4 left-1/2 ml-[-48px] font-['Liberation_Sans',sans-serif] text-xl">persp</Note>
          <Note className="left-[46px] top-[615px] font-['Liberation_Sans',sans-serif] text-lg leading-5">
            <span className="text-[#0f0]">y</span>
          </Note>
          <Note className="left-[17px] top-[648px] font-['Liberation_Sans',sans-serif] text-lg leading-5">
            <span className="text-[#00f]">z</span>
          </Note>
          <Note className="left-[57px] top-[654px] font-['Liberation_Sans',sans-serif] text-lg leading-5">
            <span className="text-[#f00]">x</span>
          </Note>
        </div>
      </section>

      {/* splitter */}
      <div className="flex h-1 items-end justify-center">
        <div className="h-0.5 w-1/3 bg-[repeating-linear-gradient(90deg,#888_0_2px,transparent_2px_6px)]" />
      </div>

      {/* node editor */}
      <section className="flex min-h-0 flex-[787] flex-col">
        <div className="pl-[5px] pt-2">
          <Menu items={names("Edit View Bookmarks Tabs Options Display Show Panels")} />
        </div>
        <div className="flex h-[66px] items-center gap-0.5 pl-1.5">
          <BigBtn name="addNode" />
          <Sep tall />
          {names("swap inBox inOut outBox").map((k) => <BigBtn key={k} name={k} />)}
          <Sep tall />
          {names("sparkles addSel subSel graph").map((k) => <BigBtn key={k} name={k} />)}
          <Sep tall />
          {names("bars1 bars2 bars3 bars4 search swatch").map((k) => <BigBtn key={k} name={k} />)}
          <Sep tall />
          {names("markAdd markEdit markPrev markNext").map((k) => <BigBtn key={k} name={k} />)}
          <Sep tall />
          <BigBtn name="viewA" />
          <BigBtn name="viewB" on />
          <BigBtn name="viewC" />
          <div className="h-[52px] w-px bg-[#2e2e2e]" />
          <BigBtn name="unlock" />
          <Sep tall />
          <BigBtn name="zero" />
          <BigBtn name="collapse" />
          <input aria-label="Depth" defaultValue="-1" className="h-[54px] w-[54px] rounded-xs bg-[#2b2b2b] pl-2 text-[21px] text-[#d8d8d8]" />
          <BigBtn name="expand" />
          <BigBtn name="infinity" />
          <Sep tall />
          <BigBtn name="hash" on />
          <BigBtn name="magnet" />
          <Sep tall />
          <BigBtn name="frame" />
          <div className="relative ml-0.5">
            <input aria-label="Search" placeholder="Search..." className="h-[37px] w-[354px] rounded-xs bg-[#2b2b2b] pl-1.5 text-[21px] text-[#c8c8c8] placeholder:text-[#7c7c7c]" />
            <button aria-label="Search options" className="absolute inset-y-0 right-[5px]">
              <svg width="20" height="11" viewBox="0 0 20 11"><path d="M0 0h20L10 11z" fill="#c8c8c8" /></svg>
            </button>
          </div>
        </div>

        <div className="ml-[7px] mr-2.5 flex h-9 items-end gap-1 bg-[#373737] pl-[3px]">
          <button className="h-8 rounded-t-xs bg-[#444] px-[21px] text-[20px] leading-8 text-[#e8e8e8]">linearInterp</button>
          <button className="h-8 w-[59px] rounded-t-xs border border-b-0 border-[#2c2c2c] text-[20px] leading-7 text-[#c8c8c8]" aria-label="New tab">+</button>
        </div>

        <div className="mb-1.5 ml-[7px] mr-[10px] flex min-h-0 flex-1 flex-col border-[3px] border-t-2 border-[#2b2b2b]">
          <div className="relative flex-1 overflow-hidden border-[3px] border-t-2 border-[#484848] bg-[#2e2e2e]">
            <svg className="absolute inset-0 h-full w-full" aria-hidden="true">
              <defs>
                <pattern id="cells" x="15.600" y="4.900" width="19.440" height="19.440" patternUnits="userSpaceOnUse">
                  <path d="M0 .5h19.440M.5 0v19.440" stroke="#232323" strokeWidth="1.400" />
                </pattern>
              </defs>
              <rect width="100%" height="100%" fill="url(#cells)" />
              {wires.map(([a, b, c]) => <Wire key={a + b} from={a} to={b} color={c} />)}
              <path d="M2146 542C2167 538 2153 522 1967 515C1897 512 1807 508 1758 506C1637 500 1467 492 1398 481C1357 474 1363 469 1374 469" fill="none" stroke={GREEN} strokeWidth="1.200" />
              <path d="M1755 506l6-3v6z" fill="#7d9c6c" />
              <path d="M2146 542C2163 533 2153 530 2100 530C1990 532 1860 542 1795 540C1772 538 1776 530 1787 530" fill="none" stroke={TEAL} strokeWidth="1.200" />
            </svg>
            {nodes.map((d) => <GraphNode key={d.id} d={d} />)}
          </div>
        </div>
        <div className="mb-1 h-1 bg-[#383838]" />
      </section>
    </div>
  );
}
